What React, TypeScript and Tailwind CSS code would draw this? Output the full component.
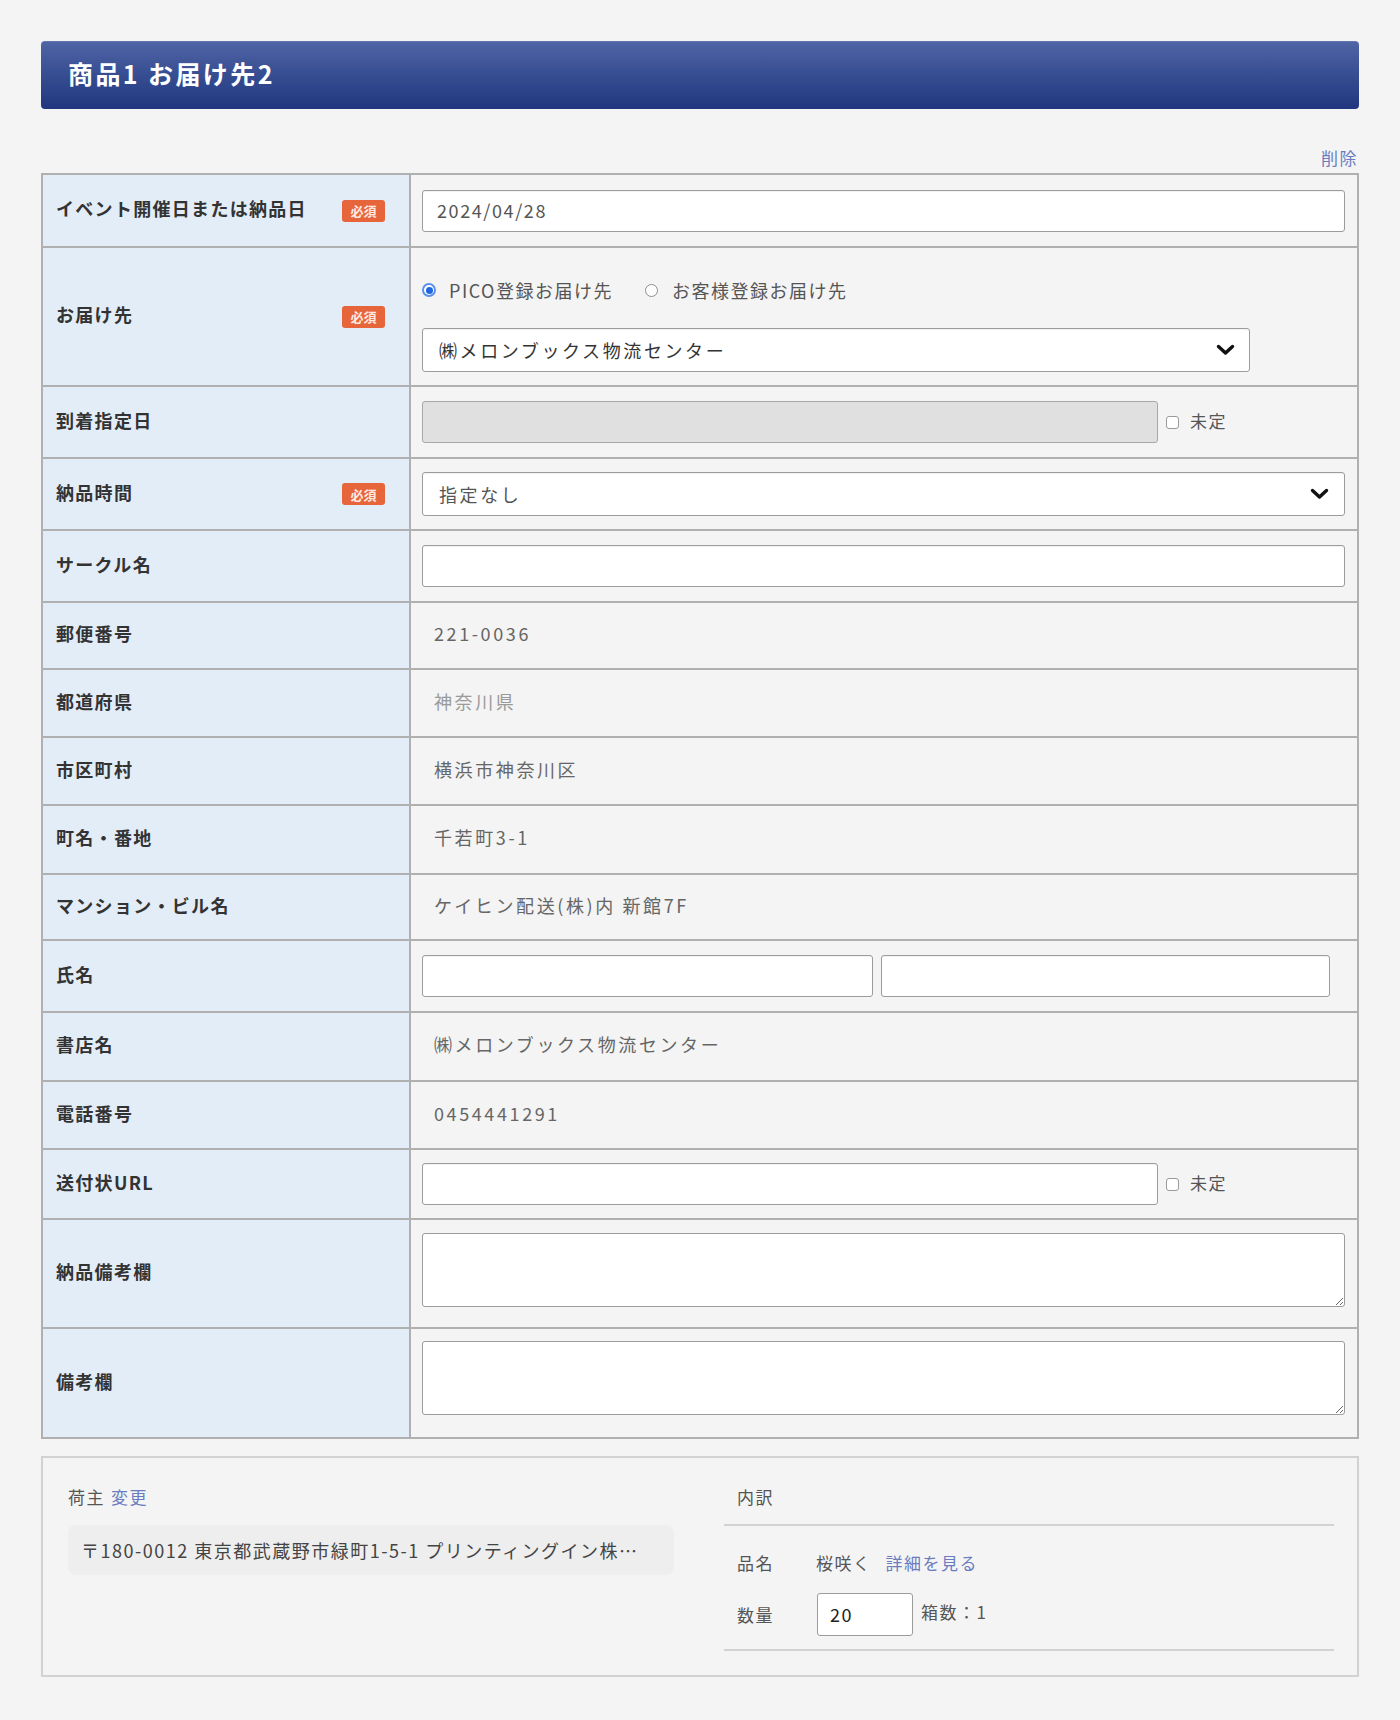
import React from "react";

const FONT = { fontFamily: '"Noto Sans CJK JP", "Noto Sans", sans-serif' };

function Badge() {
  return (
    <span className="inline-flex h-[22px] w-[43px] items-center justify-center rounded-[3px] bg-[#e6653b] text-[13px] font-bold leading-none text-[#ffe9e0]">
      必須
    </span>
  );
}

function Chevron() {
  return (
    <svg width="19" height="12" viewBox="0 0 19 12" className="shrink-0">
      <path d="M2.5 2.5 L9.5 9 L16.5 2.5" fill="none" stroke="#111" strokeWidth="3.4" strokeLinecap="round" strokeLinejoin="round" />
    </svg>
  );
}

function Checkbox() {
  return <span className="inline-block h-[13px] w-[13px] rounded-[3px] border border-[#9a9a9a] bg-white" />;
}

function Row({
  label,
  required,
  h,
  last,
  top,
  children,
}: {
  label: string;
  required?: boolean;
  h: string;
  last?: boolean;
  top?: boolean;
  children: React.ReactNode;
}) {
  return (
    <div className={`flex ${h} ${last ? "" : "border-b-2 border-[#b0b0b0]"}`}>
      <div className="flex w-[368px] shrink-0 items-center justify-between border-r-2 border-[#b0b0b0] bg-[#e3edf8] pl-[13px] pr-[24px]">
        <span className="mb-[4px] text-[18px] font-bold tracking-[1.3px] text-[#333]">{label}</span>
        {required && <Badge />}
      </div>
      <div className={`flex flex-1 pl-[11px] pr-[12px] ${top ? "items-start" : "items-center"}`}>{children}</div>
    </div>
  );
}

const inputCls =
  "h-[42px] rounded-[3px] border border-[#9c9c9c] bg-white shadow-[inset_0_1px_1px_rgba(0,0,0,0.06)]";

function Value({ children, light }: { children: React.ReactNode; light?: boolean }) {
  return (
    <span className={`mb-[4px] pl-[12px] text-[18px] tracking-[2.6px] ${light ? "text-[#9a9a9a]" : "text-[#666]"}`}>{children}</span>
  );
}

export default function App() {
  return (
    <div className="min-h-[1720px] w-full bg-[#f4f4f4] px-[41px] pt-[41px]" style={FONT}>
      <div className="flex h-[68px] items-center rounded-[4px] border-t border-[#6275b0] bg-linear-to-b from-[#4f64a4] to-[#20367f] pl-[27px]">
        <h1 className="mb-[3px] text-[25px] font-bold tracking-[2.4px] text-white">商品1 お届け先2</h1>
      </div>

      <div className="mt-[37px] flex h-[24px] items-center justify-end pr-[1px]">
        <span className="text-[17px] tracking-[1.5px] text-[#6a7cbf]">削除</span>
      </div>

      <div className="mt-[3px] border-2 border-[#b0b0b0]">
        <Row label="イベント開催日または納品日" required h="h-[73px]">
          <div className={`${inputCls} flex w-full items-center pl-[14px] text-[18px] tracking-[1.6px] text-[#555]`}>2024/04/28</div>
        </Row>

        <Row label="お届け先" required h="h-[139px]" top>
          <div className="flex w-full flex-col pt-[30px]">
            <div className="flex h-[24px] items-center">
              <span className="flex h-[14px] w-[14px] items-center justify-center rounded-full border-2 border-[#5b8ff0] bg-white">
                <span className="h-[7px] w-[7px] rounded-full bg-[#1f66e0]" />
              </span>
              <span className="ml-[13px] text-[18px] tracking-[1.5px] text-[#555]">PICO登録お届け先</span>
              <span className="ml-[32px] h-[13px] w-[13px] rounded-full border border-[#8d8d8d] bg-white" />
              <span className="ml-[14px] text-[18px] tracking-[1.5px] text-[#555]">お客様登録お届け先</span>
            </div>
            <div className={`${inputCls} mt-[26px] flex h-[44px] w-[828px] items-center justify-between pl-[16px] pr-[14px]`}>
              <span className="text-[18px] tracking-[2.6px] text-[#333]">㈱メロンブックス物流センター</span>
              <Chevron />
            </div>
          </div>
        </Row>

        <Row label="到着指定日" h="h-[72px]">
          <div className="h-[42px] w-[736px] rounded-[3px] border border-[#a8a8a8] bg-[#e0e0e0]" />
          <span className="ml-[8px] flex items-center">
            <Checkbox />
          </span>
          <span className="ml-[11px] mb-[3px] text-[17px] tracking-[1.5px] text-[#555]">未定</span>
        </Row>

        <Row label="納品時間" required h="h-[72px]">
          <div className={`${inputCls} flex h-[44px] w-full items-center justify-between pl-[16px] pr-[15px]`}>
            <span className="text-[18px] tracking-[2.6px] text-[#555]">指定なし</span>
            <Chevron />
          </div>
        </Row>

        <Row label="サークル名" h="h-[72px]">
          <div className={`${inputCls} w-full`} />
        </Row>

        <Row label="郵便番号" h="h-[67px]">
          <Value>221-0036</Value>
        </Row>
        <Row label="都道府県" h="h-[68px]">
          <Value light>神奈川県</Value>
        </Row>
        <Row label="市区町村" h="h-[68px]">
          <Value>横浜市神奈川区</Value>
        </Row>
        <Row label="町名・番地" h="h-[69px]">
          <Value>千若町3-1</Value>
        </Row>
        <Row label="マンション・ビル名" h="h-[66px]">
          <Value>ケイヒン配送(株)内 新館7F</Value>
        </Row>

        <Row label="氏名" h="h-[72px]">
          <div className={`${inputCls} w-[451px]`} />
          <div className={`${inputCls} ml-[8px] w-[449px]`} />
        </Row>

        <Row label="書店名" h="h-[69px]">
          <Value>㈱メロンブックス物流センター</Value>
        </Row>
        <Row label="電話番号" h="h-[68px]">
          <Value>0454441291</Value>
        </Row>

        <Row label="送付状URL" h="h-[70px]">
          <div className={`${inputCls} w-[736px]`} />
          <span className="ml-[8px] flex items-center">
            <Checkbox />
          </span>
          <span className="ml-[11px] mb-[3px] text-[17px] tracking-[1.5px] text-[#555]">未定</span>
        </Row>

        <Row label="納品備考欄" h="h-[109px]">
          <div className="flex h-full w-full flex-col pt-[13px]">
            <textarea className="block h-[74px] w-full resize rounded-[3px] border border-[#9c9c9c] bg-white" />
          </div>
        </Row>
        <Row label="備考欄" h="h-[108px]" last>
          <div className="flex h-full w-full flex-col pt-[12px]">
            <textarea className="block h-[74px] w-full resize rounded-[3px] border border-[#9c9c9c] bg-white" />
          </div>
        </Row>
      </div>

      <div className="mt-[17px] grid grid-cols-[606px_1fr] gap-[50px] border-2 border-[#d2d2d2] pb-[24px] pl-[25px] pr-[23px] pt-[25px]">
        <div>
          <div className="flex h-[28px] items-center text-[17px] tracking-[1.5px]">
            <span className="text-[#555]">荷主</span>
            <span className="ml-[6px] text-[#6a7cbf]">変更</span>
          </div>
          <div className="mt-[14px] flex h-[50px] items-center rounded-[8px] bg-[#eeeeee] pl-[13px]">
            <span className="whitespace-nowrap text-[18px] tracking-[1.5px] text-[#444]">〒180-0012 東京都武蔵野市緑町1-5-1 プリンティングイン株…</span>
          </div>
        </div>
        <div>
          <div className="flex h-[28px] items-center pl-[13px] text-[17px] tracking-[1.5px] text-[#555]">内訳</div>
          <div className="mt-[13px] h-[2px] bg-[#d2d2d2]" />
          <div className="mt-[23px] flex h-[28px] items-center pl-[13px] text-[17px] tracking-[1.5px]">
            <span className="w-[79px] text-[#555]">品名</span>
            <span className="text-[#555]">桜咲く</span>
            <span className="ml-[14px] text-[#6a7cbf]">詳細を見る</span>
          </div>
          <div className="mt-[16px] flex h-[43px] items-center pl-[13px] text-[17px] tracking-[1.5px]">
            <span className="w-[80px] text-[#555]">数量</span>
            <div className="flex h-[43px] w-[96px] items-center rounded-[3px] border border-[#9c9c9c] bg-white pl-[12px] text-[18px] text-[#222]">20</div>
            <span className="ml-[8px] -mt-[6px] text-[#555]">箱数：1</span>
          </div>
          <div className="mt-[13px] h-[2px] bg-[#d2d2d2]" />
        </div>
      </div>
    </div>
  );
}
